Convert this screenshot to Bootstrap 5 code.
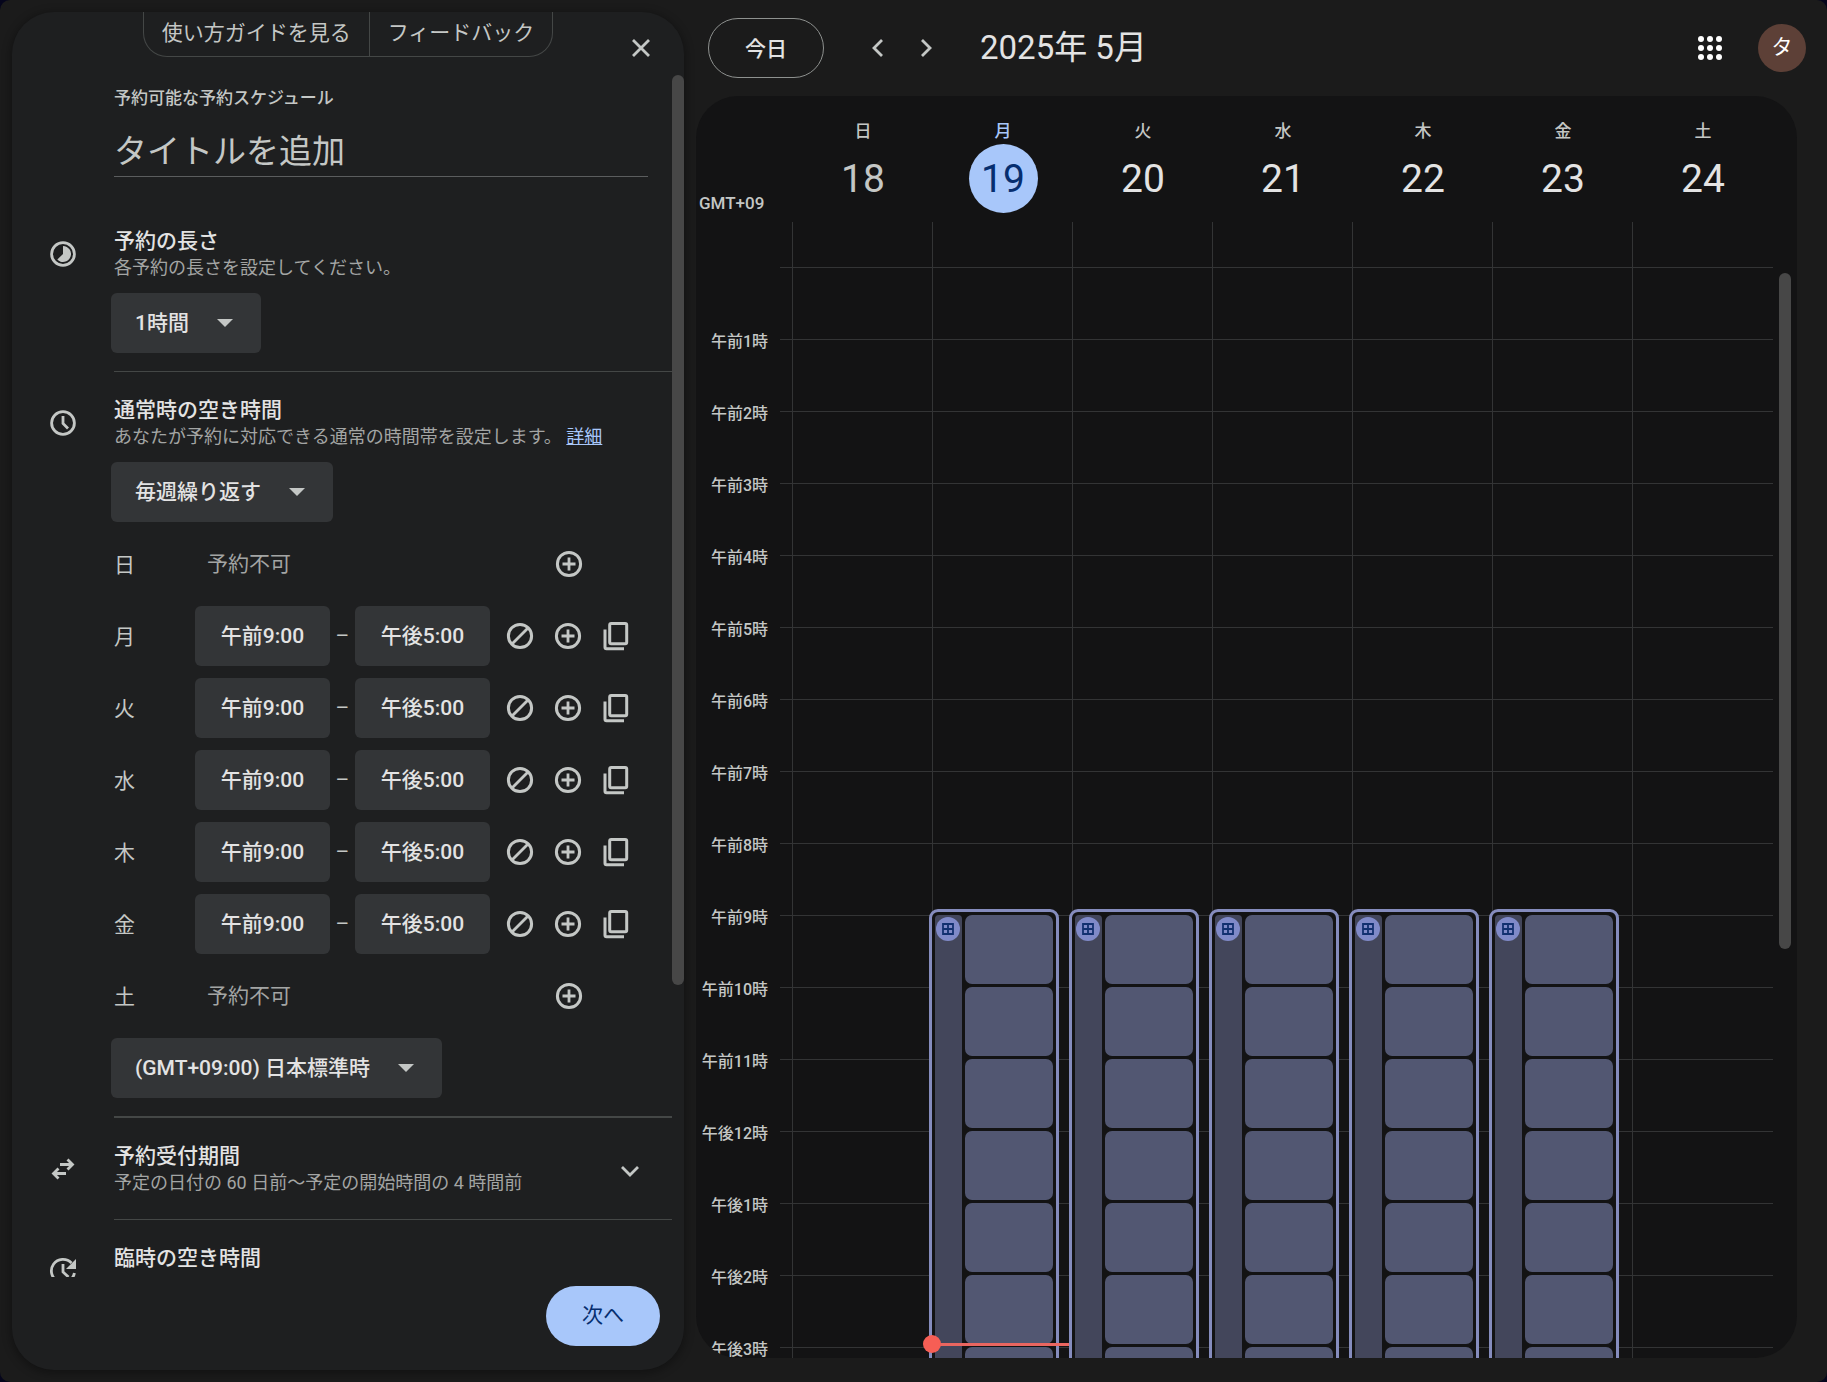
<!DOCTYPE html>
<html lang="ja" data-bs-theme="dark">
<head>
<meta charset="utf-8">
<meta name="viewport" content="width=device-width, initial-scale=1">
<title>予約スケジュール</title>
<link rel="stylesheet" href="https://cdn.jsdelivr.net/npm/bootstrap@5.3.0/dist/css/bootstrap.min.css">
<style>
  :root { --ink: #e3e3e3; --soft: #c4c7c5; --dim: #a3a5a4; --line: #444746; --accent: #a8c7fa; --navy: #062e6f; }
  html { background: #05051c; }
  body { font-family: Roboto, "Noto Sans CJK JP", sans-serif; font-size: 21px; line-height: 28px; color: var(--ink); background: transparent; }
  .app { height: 100vh; background: #1b1b1b; border-radius: 10px; }
  svg { display: block; fill: none; stroke: currentColor; }

  /* editor panel */
  .editor { flex: 0 0 672px; margin: 12px; background: #1e1f20; border-radius: 42px; box-shadow: 0 2px 8px 2px rgba(0,0,0,.3); }
  .editor-head { height: 60px; }
  .guide-tabs { height: 45px; border: 1px solid var(--line); border-top: 0; border-radius: 0 0 24px 24px; }
  .guide-tabs .btn { border: 0; border-radius: 0; font-size: 21px; line-height: 28px; padding: 0 18px 2px; color: var(--soft); }
  .guide-tabs .btn + .btn { border-left: 1px solid var(--line); }
  .close-btn { position: absolute; top: 12px; right: 19px; }
  .icon-btn { width: 48px; height: 48px; padding: 0; border: 0; color: var(--soft); display: flex; align-items: center; justify-content: center; }
  .thumb { width: 12px; border-radius: 6px; background: #474747; }
  .editor .thumb { height: 910px; margin-top: 3px; }
  .kind { display: block; font-size: 17px; line-height: 24px; font-weight: 500; color: var(--soft); padding-top: 14px; margin-left: 102px; }
  .title-box { display: block; width: 534px; height: 52px; margin: 15px 24px 26px 102px; font-size: 33px; color: var(--soft); background: none; border: 0; border-bottom: 1px solid #5b5d5e; padding: 2px 0 0; }
  .title-box::placeholder { color: var(--soft); opacity: 1; }
  .sect-icon { flex: 0 0 102px; padding: 36px 0 0 36px; color: var(--soft); }
  .sect-body { padding: 24px 0 18px; border-bottom: 1px solid var(--line); }
  .sect-body.thick { border-bottom-width: 2px; }
  .sect-body.summary { padding-bottom: 23px; }
  h2 { font-size: 21px; line-height: 28px; font-weight: 500; margin: 0; color: var(--ink); }
  .hint { font-size: 18px; line-height: 26px; color: var(--dim); margin: 0; }
  .hint a { color: var(--accent); }
  .filled { height: 60px; border: 0; border-radius: 6px; background-color: #333537; color: var(--ink); font-size: 21px; font-weight: 500; }
  .picker { display: block; appearance: none; margin: 12px 0 0 -3px; padding: 0 72px 0 24px;
    background-image: url("data:image/svg+xml,%3Csvg xmlns='http://www.w3.org/2000/svg' viewBox='0 0 16 8'%3E%3Cpath d='M0 0h16L8 8z' fill='%23c4c7c5'/%3E%3C/svg%3E");
    background-repeat: no-repeat; background-position: right 28px center; background-size: 16px 8px; }
  .week { margin-top: 6px; }
  .week + .picker { margin-top: 6px; }
  .day-row { height: 72px; }
  .day-name { width: 81px; color: var(--soft); padding-top: 2px; }
  .closed { width: 350px; padding-left: 12px; color: var(--dim); }
  .time-box { width: 135px; padding: 0 0 4px; text-align: center; }
  .time-box.until { margin-right: 6px; }
  .dash { width: 25px; text-align: center; color: var(--soft); }
  .fold-btn { margin: 5px 18px 0 0; }
  .editor-foot { height: 93px; padding: 9px 24px 0 0; }
  .next-btn { width: 114px; height: 60px; border: 0; font-size: 21px; background: var(--accent); color: var(--navy); }

  /* calendar */
  .calendar-head { height: 96px; padding-left: 12px; padding-right: 21px; }
  .today-btn { width: 116px; height: 60px; border: 1px solid #8e918f; color: var(--ink); font-size: 21px; font-weight: 500; padding: 4px 0 0; }
  .week-nav { margin: 0 30px; }
  .month { font-size: 33px; line-height: 42px; margin: 0; font-weight: 400; color: var(--ink); }
  .avatar { width: 48px; height: 48px; background: #5d4037; color: #fff; font-size: 21px; border: 0; padding: 0; }
  .sheet { background: #131314; border-radius: 42px; margin: 0 30px 24px 0; }
  .sheet-head { height: 126px; padding-right: 25px; }
  .zone { flex: 0 0 96px; font-size: 17px; font-weight: 500; padding: 93px 0 0 3px; color: var(--soft); }
  .day-head { flex: 1 1 0; font-size: 17px; font-weight: 500; color: var(--soft); padding: 22px 0 0 2px; line-height: 26px; }
  .date-dot { width: 69px; height: 69px; font-size: 39px; line-height: 71px; font-weight: 400; color: var(--ink); border-radius: 50%; }
  .past .date-dot { color: var(--soft); }
  .now-day { color: var(--accent); }
  .now-day .date-dot { background: var(--accent); color: var(--navy); }
  .grid-body { display: grid; grid-template-columns: 100%; grid-template-rows: 100%; }
  .grid-body > * { grid-area: 1 / 1; min-height: 0; }
  .hours { padding-top: 45px; padding-right: 24px; }
  .hour { height: 72px; flex: none; }
  .hour-name { width: 72px; margin-right: 12px; margin-top: -8px; text-align: right; font-size: 16px; font-weight: 500; line-height: 21px; color: var(--soft); }
  .hour-line { border-top: 1px solid #333435; }
  .days { padding: 0 25px 0 96px; }
  .day { flex: 1 1 0; min-width: 0; border-left: 1px solid #333435; position: relative; }
  .sheet .thumb { position: absolute; right: 6px; top: 51px; height: 676px; }
  .block { margin: 687px 13px 0 -4px; height: 588px; padding: 3px; gap: 3px; border: 3px solid #858cbd; border-radius: 9px; background: #131314; }
  .rail { flex: 0 0 27px; background: #43465b; border-radius: 4px 4px 0 0; padding: 2px 0 0 1px; }
  .rail span { width: 24px; height: 24px; background: #808ac8; color: #12306f; }
  .slot { height: 69px; flex: none; background: #525772; border-radius: 7px; }
  .now-line { position: absolute; left: -1px; right: -1px; top: 1121px; height: 3px; background: #ea6660; }
  .now-line::before { content: ""; position: absolute; left: -9px; top: -8px; width: 18px; height: 18px; border-radius: 50%; background: #f65e55; }
</style>
<script src="https://cdn.jsdelivr.net/npm/bootstrap@5.3.0/dist/js/bootstrap.bundle.min.js"></script>
</head>
<body class="overflow-hidden">
<svg width="0" height="0" class="position-absolute" aria-hidden="true">
  <symbol id="i-plus" viewBox="0 0 32 32"><circle cx="16" cy="16" r="11.6" stroke-width="3"/><path d="M16 9.500v13M9.500 16h13" stroke-width="2.800"/></symbol>
  <symbol id="i-ban" viewBox="0 0 32 32"><circle cx="16" cy="16" r="11.6" stroke-width="3"/><path d="M8 24L24 8" stroke-width="2.800"/></symbol>
  <symbol id="i-copy" viewBox="0 0 32 32"><rect x="9.700" y="3.400" width="17" height="20.400" rx="1.500" stroke-width="3"/><path d="M5 9.500v17.700q0 1.500 1.500 1.500H24" stroke-width="3"/></symbol>
  <symbol id="i-grid" viewBox="0 0 12 12"><path d="M1 1h10v10H1zM6 1v10M1 6h10" stroke-width="1.800"/></symbol>
</svg>

<div class="app d-flex">
  <aside class="editor d-flex flex-column overflow-hidden" aria-label="予約スケジュールの編集">
    <header class="editor-head position-relative d-flex justify-content-center align-items-start flex-shrink-0">
      <div class="guide-tabs d-flex">
        <button type="button" class="btn">使い方ガイドを見る</button>
        <button type="button" class="btn">フィードバック</button>
      </div>
      <button type="button" class="btn icon-btn close-btn" aria-label="閉じる">
        <svg width="20" height="20" viewBox="0 0 20 20"><path d="M2 2l16 16M18 2L2 18" stroke-width="2.800"/></svg>
      </button>
    </header>

    <div class="d-flex flex-fill overflow-hidden" style="min-height:0">
      <form class="flex-fill">
        <label class="kind" for="title">予約可能な予約スケジュール</label>
        <input class="title-box" id="title" type="text" placeholder="タイトルを追加">

        <section class="d-flex">
          <div class="sect-icon"><svg width="30" height="30" viewBox="0 0 30 30"><circle cx="15" cy="15" r="11.400" stroke-width="2.800"/><path d="M15 7a8 8 0 1 1-5.700 13.600L15 15z" fill="currentColor" stroke="none"/></svg></div>
          <div class="sect-body flex-fill">
            <h2><label for="length">予約の長さ</label></h2>
            <p class="hint">各予約の長さを設定してください。</p>
            <select class="filled picker" id="length"><option>1時間</option></select>
          </div>
        </section>

        <section class="d-flex">
          <div class="sect-icon"><svg width="30" height="30" viewBox="0 0 30 30"><circle cx="15" cy="15" r="11.400" stroke-width="2.800"/><path d="M15 8v7.400l5 5" stroke-width="2.800"/></svg></div>
          <div class="sect-body thick flex-fill">
            <h2>通常時の空き時間</h2>
            <p class="hint">あなたが予約に対応できる通常の時間帯を設定します。 <a href="#">詳細</a></p>
            <select class="filled picker" aria-label="繰り返し"><option>毎週繰り返す</option></select>
            <div class="week" id="week"></div>
            <select class="filled picker" aria-label="タイムゾーン"><option>(GMT+09:00) 日本標準時</option></select>
          </div>
        </section>

        <section class="d-flex">
          <div class="sect-icon"><svg width="30" height="30" viewBox="0 0 30 30"><path d="M12 10.500h12M19.500 5.500l5 5-5 5M18 19.500H6M10.500 14.500l-5 5 5 5" stroke-width="2.800"/></svg></div>
          <div class="sect-body summary flex-fill d-flex justify-content-between">
            <div>
              <h2>予約受付期間</h2>
              <p class="hint">予定の日付の 60 日前～予定の開始時間の 4 時間前</p>
            </div>
            <button type="button" class="btn icon-btn fold-btn" aria-label="開く"><svg width="20" height="14" viewBox="0 0 20 14"><path d="M2 3l8 8 8-8" stroke-width="2.800"/></svg></button>
          </div>
        </section>

        <section class="d-flex">
          <div class="sect-icon"><svg width="30" height="30" viewBox="0 0 30 30"><path d="M23.500 7A11.600 11.600 0 1 0 26.400 17M15 8v8l5.500 5" stroke-width="2.800"/><path d="M28 3v10H18z" fill="currentColor" stroke="none"/></svg></div>
          <div class="sect-body flex-fill"><h2>臨時の空き時間</h2></div>
        </section>
      </form>
      <div class="thumb flex-shrink-0"></div>
    </div>

    <footer class="editor-foot d-flex justify-content-end align-items-start flex-shrink-0">
      <button type="button" class="btn rounded-pill next-btn">次へ</button>
    </footer>
  </aside>

  <main class="flex-fill d-flex flex-column" style="min-width:0">
    <header class="calendar-head d-flex align-items-center flex-shrink-0">
      <button type="button" class="btn rounded-pill today-btn">今日</button>
      <div class="week-nav d-flex">
        <button type="button" class="btn icon-btn" aria-label="前の週"><svg width="12" height="20" viewBox="0 0 12 20"><path d="M10 2l-8 8 8 8" stroke-width="2.800"/></svg></button>
        <button type="button" class="btn icon-btn" aria-label="次の週"><svg width="12" height="20" viewBox="0 0 12 20"><path d="M2 2l8 8-8 8" stroke-width="2.800"/></svg></button>
      </div>
      <h1 class="month">2025年 5月</h1>
      <button type="button" class="btn icon-btn ms-auto me-4 text-white" aria-label="アプリ">
        <svg width="24" height="24" viewBox="0 0 24 24" style="fill:currentColor;stroke:none"><circle cx="3" cy="3" r="3"/><circle cx="12" cy="3" r="3"/><circle cx="21" cy="3" r="3"/><circle cx="3" cy="12" r="3"/><circle cx="12" cy="12" r="3"/><circle cx="21" cy="12" r="3"/><circle cx="3" cy="21" r="3"/><circle cx="12" cy="21" r="3"/><circle cx="21" cy="21" r="3"/></svg>
      </button>
      <button type="button" class="btn rounded-circle avatar" aria-label="アカウント タ">タ</button>
    </header>

    <div class="sheet flex-fill d-flex flex-column overflow-hidden" style="min-height:0">
      <div class="sheet-head d-flex flex-shrink-0" id="heads"><div class="zone">GMT+09</div></div>
      <div class="grid-body flex-fill position-relative overflow-hidden" style="min-height:0">
        <div class="hours d-flex flex-column overflow-hidden" id="hours"></div>
        <div class="days d-flex overflow-hidden" id="days"></div>
        <div class="thumb"></div>
      </div>
    </div>
  </main>
</div>

<script>
  const names = ['日', '月', '火', '水', '木', '金', '土'];
  const open = i => i > 0 && i < 6;
  const put = (id, html) => document.getElementById(id).insertAdjacentHTML('beforeend', html);
  const iconBtn = (icon, label) => `<button type="button" class="btn icon-btn" aria-label="${label}"><svg width="32" height="32"><use href="#i-${icon}"/></svg></button>`;

  names.forEach((d, i) => {
    put('week', `<div class="day-row d-flex align-items-center"><span class="day-name">${d}</span>` + (open(i)
      ? `<input class="filled time-box" type="text" value="午前9:00" aria-label="${d} 開始"><span class="dash">–</span><input class="filled time-box until" type="text" value="午後5:00" aria-label="${d} 終了">`
        + iconBtn('ban', '予約不可にする') + iconBtn('plus', '時間を追加') + iconBtn('copy', 'すべてにコピー')
      : `<span class="closed">予約不可</span>` + iconBtn('plus', '時間を追加')) + '</div>');

    put('heads', `<div class="day-head d-flex flex-column align-items-center text-center ${i === 0 ? 'past' : i === 1 ? 'now-day' : ''}">${d}<div class="date-dot">${18 + i}</div></div>`);

    put('days', '<div class="day">' + (open(i)
      ? `<div class="block d-flex"><div class="rail"><span class="rounded-circle d-flex align-items-center justify-content-center"><svg width="12" height="12"><use href="#i-grid"/></svg></span></div><div class="flex-fill d-flex flex-column" style="gap:3px">${'<div class="slot"></div>'.repeat(8)}</div></div>`
      : '') + (i === 1 ? '<div class="now-line"></div>' : '') + '</div>');
  });

  for (let h = 0; h < 16; h++) {
    const label = h === 0 ? '' : (h < 12 ? '午前' + h : '午後' + (h === 12 ? 12 : h - 12)) + '時';
    put('hours', `<div class="hour d-flex"><div class="hour-name">${label}</div><div class="hour-line flex-fill"></div></div>`);
  }
</script>
</body>
</html>
